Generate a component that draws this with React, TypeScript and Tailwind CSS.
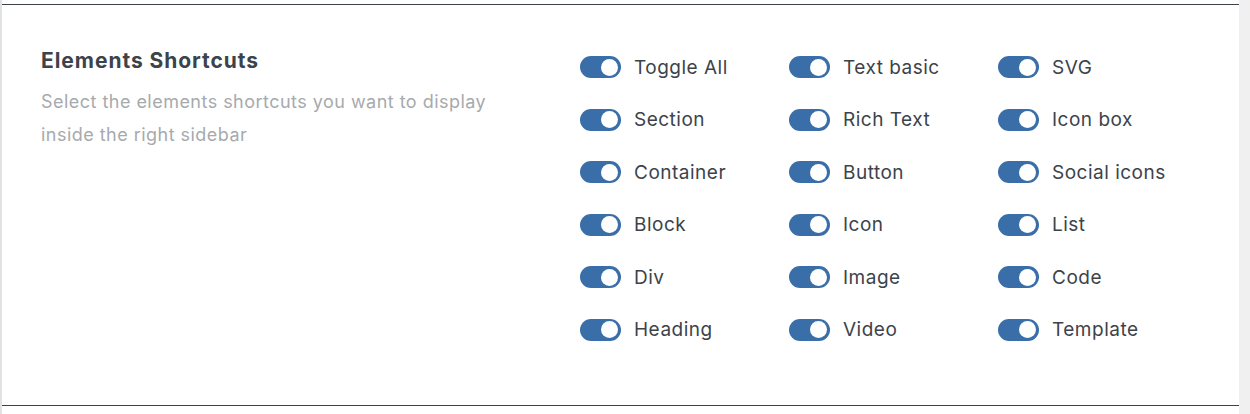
const columns: string[][] = [
  ["Toggle All", "Section", "Container", "Block", "Div", "Heading"],
  ["Text basic", "Rich Text", "Button", "Icon", "Image", "Video"],
  ["SVG", "Icon box", "Social icons", "List", "Code", "Template"],
];

function Toggle({ label }: { label: string }) {
  return (
    <div className="flex h-[22px] items-center gap-[13px]">
      <span className="flex h-[22px] w-[41px] items-center justify-end rounded-full bg-[#3a6ea8] px-[3px]">
        <span className="h-[17px] w-[17px] rounded-full bg-white" />
      </span>
      <span className="text-[19px] leading-none tracking-[0.5px] text-[#3c434a]">{label}</span>
    </div>
  );
}

export default function App() {
  return (
    <div
      className="flex h-[414px] w-[1250px] bg-[#f0f0f1]"
      style={{ fontFamily: "Inter, 'Noto Sans', sans-serif" }}
    >
      <div className="flex w-[1239px] flex-col border-l-2 border-[#e2e2e2] bg-white pt-[4px]">
        <div className="h-px bg-[#3c434a]" />
        <section className="flex flex-1 pl-[39px] pt-[44px]">
          <div className="w-[539px]">
            <h2 className="text-[21px] font-bold leading-[24px] tracking-[0.95px] text-[#3c434a]">Elements Shortcuts</h2>
            <p className="mt-[12px] w-[470px] text-[18px] leading-[33px] tracking-[0.47px] text-[#a7aaad]">
              Select the elements shortcuts you want to display inside the right sidebar
            </p>
          </div>
          <div className="flex pt-[7px]">
            {columns.map((col, i) => (
              <div key={i} className="flex w-[209px] flex-col gap-[30.6px]">
                {col.map((item) => (
                  <Toggle key={item} label={item} />
                ))}
              </div>
            ))}
          </div>
        </section>
        <div className="mb-[8px] h-px bg-[#3c434a]" />
      </div>
    </div>
  );
}
